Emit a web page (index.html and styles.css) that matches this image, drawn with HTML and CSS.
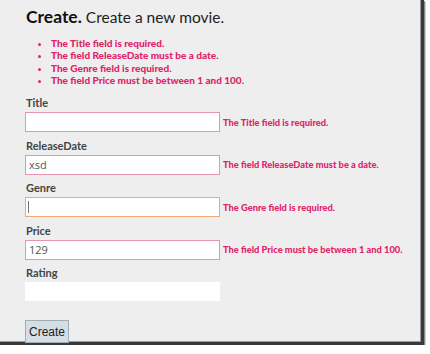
FILE: index.html
```html
<!DOCTYPE html>
<html lang="en">
<head>
  <meta charset="UTF-8" />
  <title>Create</title>
  <link rel="stylesheet" href="styles.css">
</head>
<body>
  <div class="page">
    <h1><b>Create.</b> Create a new movie.</h1>
    <ul class="summary">
      <li>The Title field is required.</li>
      <li>The field ReleaseDate must be a date.</li>
      <li>The Genre field is required.</li>
      <li>The field Price must be between 1 and 100.</li>
    </ul>
    <form class="movie-form">
      <div class="field">
        <label for="title">Title</label>
        <div class="row">
          <input id="title" class="invalid" type="text" value="" />
          <span class="field-error">The Title field is required.</span>
        </div>
      </div>
      <div class="field">
        <label for="date">ReleaseDate</label>
        <div class="row">
          <input id="date" class="invalid" type="text" value="xsd" />
          <span class="field-error">The field ReleaseDate must be a date.</span>
        </div>
      </div>
      <div class="field">
        <label for="genre">Genre</label>
        <div class="row">
          <input id="genre" class="invalid focused" type="text" value="" />
          <span class="caret"></span>
          <span class="field-error">The Genre field is required.</span>
        </div>
      </div>
      <div class="field">
        <label for="price">Price</label>
        <div class="row">
          <input id="price" class="invalid" type="text" value="129" />
          <span class="field-error">The field Price must be between 1 and 100.</span>
        </div>
      </div>
      <div class="field">
        <label for="rating">Rating</label>
        <div class="row">
          <input id="rating" class="plain" type="text" value="" />
        </div>
      </div>
      <button type="button">Create</button>
    </form>
  </div>
</body>
</html>
```

FILE: styles.css
```css
body {
  margin: 0;
  background: #fff;
  font-family: Lato, "Liberation Sans", sans-serif;
}
.page {
  width: 395px;
  height: 337px;
  padding: 5px 0 0 26px;
  background: #eeeeee;
  border-right: 3px solid #3a3a3a;
  border-bottom: 3px solid #3a3a3a;
  box-shadow: inset -1px -1px 0 #9a9a9a, 1px 1px 0 #8a8a8a, 2px 2px 0 #cfcfcf;
}
h1 {
  margin: 0;
  font-size: 15.5px;
  line-height: 24px;
  font-weight: 400;
  color: #222;
}
h1 b {
  font-size: 17.5px;
  font-weight: 700;
  color: #111;
}
.summary {
  margin: 8px 0 0 0;
  padding-left: 25px;
  color: #e0246a;
  font-size: 10px;
  font-weight: 900;
  line-height: 12.3px;
}
.movie-form {
  margin-top: 10px;
}
.field {
  margin-bottom: 6.5px;
}
.field label {
  display: block;
  font-size: 11px;
  font-weight: 700;
  line-height: 14px;
  color: #444;
}
.row {
  display: flex;
  align-items: center;
  margin-top: 2px;
  position: relative;
}
input {
  flex-shrink: 0;
  width: 195px;
  height: 20px;
  box-sizing: border-box;
  margin: 0 0 0 -1px;
  padding: 0 3px;
  font-family: "Open Sans", "Liberation Sans", sans-serif;
  font-size: 11px;
  color: #555;
  background: #fff;
  outline: none;
}
input.invalid {
  border: 1px solid #e894b0;
}
input.focused {
  border-color: #f0a878;
}
input.plain {
  border: none;
  height: 19px;
}
.caret {
  position: absolute;
  left: 2px;
  top: 4px;
  width: 1px;
  height: 12px;
  background: #777;
}
.field-error {
  margin-left: 3px;
  white-space: nowrap;
  color: #e0246a;
  font-size: 9.3px;
  font-weight: 900;
}
button {
  margin: 12.5px 0 0 -1px;
  width: 44px;
  height: 23px;
  padding: 0;
  border: 1px solid #a3abb3;
  background: #d5dde5;
  font-family: "Liberation Sans", Arial, sans-serif;
  font-size: 12px;
  color: #222;
}
```
